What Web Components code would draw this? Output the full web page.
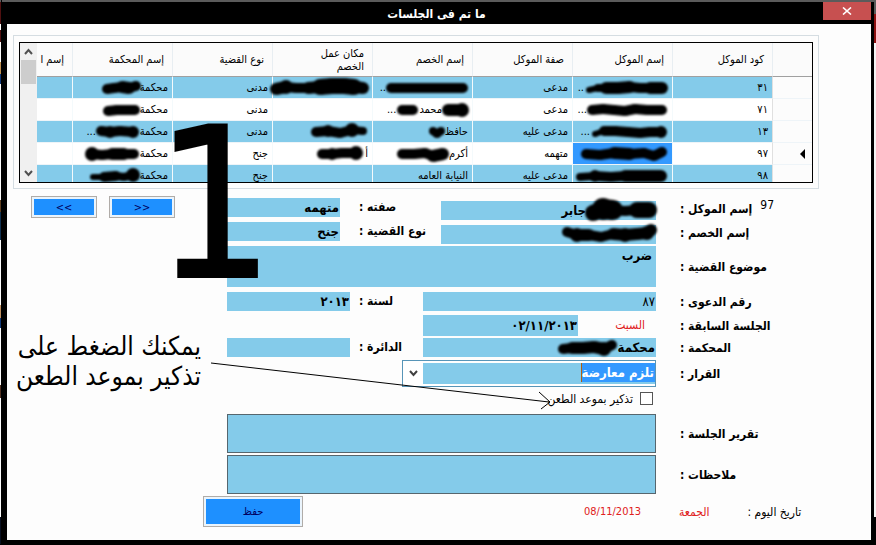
<!DOCTYPE html>
<html lang="ar">
<head>
<meta charset="utf-8">
<title>ما تم فى الجلسات</title>
<style>
html, body { margin: 0; min-height: 100%; background: #000; }
body { font-family: "DejaVu Sans Condensed", "DejaVu Sans", sans-serif; font-size: 11px; color: #000; }
</style>
</head>
<body>
<session-window></session-window>
<script>
const define = (name, html, setup) => customElements.define(name, class extends HTMLElement {
  constructor() {
    super();
    this.attachShadow({ mode: 'open' }).innerHTML = html;
  }
  connectedCallback() { if (setup) setup.call(this, this.shadowRoot); }
});

/* A scribble of soft black ink; points are "x,y,radius" joined in order. */
define('ink-blot', `<style>
  :host { display: block; flex: none; height: 16px; }
  :host([over]) { position: absolute; right: -1px; top: 0; }
  svg { display: block; overflow: visible; filter: blur(1.3px); }
</style><svg height="16"></svg>`, function (root) {
  const pts = this.getAttribute('points').split(' ').map(p => p.split(',').map(Number));
  const svg = root.querySelector('svg');
  svg.setAttribute('width', this.getAttribute('width'));
  let s = '';
  pts.forEach(([x, y, r], i) => {
    s += `<circle cx="${x}" cy="${y}" r="${r}"/>`;
    if (i) {
      const [a, b, q] = pts[i - 1];
      s += `<path d="M${a} ${b}L${x} ${y}" stroke="#000" stroke-width="${Math.min(r, q) * 2}"/>`;
    }
  });
  svg.innerHTML = s;
});

define('title-bar', `<style>
  :host { display: grid; grid-template-columns: 48px 1fr 48px; height: 22px; color: #fff; background: #000; border-top: 2px solid #5b5b5b; }
  h1 { margin: 0; grid-column: 2; text-align: center; font-size: 12px; line-height: 24px; font-weight: bold; }
  button { height: 18px; padding: 0; border: 0; background: #c75050; display: grid; place-items: center; }
</style><h1 dir="rtl"><slot></slot></h1>
<button aria-label="إغلاق"><svg width="10" height="8" viewBox="0 0 10 8"><path d="M1 .5L9 7.5M9 .5L1 7.5" stroke="#fff" stroke-width="1.6"/></svg></button>`);

define('scroll-strip', `<style>
  :host { display: flex; flex-direction: column; width: 17px; background: #f0f0f0; }
  button { height: 17px; padding: 0; border: 0; background: none; display: grid; place-items: center; }
  i { height: 24px; background: #cdcdcd; margin: 0 1px; }
  span { flex: 1; }
  path { fill: none; stroke: #505050; stroke-width: 2; }
</style>
<button aria-label="أعلى"><svg width="9" height="7"><path d="M1 6L4.500 2L8 6"/></svg></button><i></i><span></span>
<button aria-label="أسفل"><svg width="9" height="7"><path d="M1 1L4.500 5L8 1"/></svg></button>`);

const ROWS = [
  { code: '٣١', cells: [['*84|5,10,3 14,8,4 22,8,6 34,8,6 46,7,6 56,8,5 66,8,6 78,8,6', '..'], ['مدعى'],
    ['*82|5,8,5 18,8,5 34,8,5 50,8,5 64,8,5 77,8,5', '..'], ['*96|4,9,6 14,7,7 24,8,5 36,8,6 48,7,8 60,6,8 72,6,8 82,7,8 91,8,6'], ['مدنى'], ['محكمة', '*38|5,9,5 12,8,5 20,7,6 27,8,6 34,6,5']] },
  { code: '٧١', cells: [['*81|5,8,5 16,7,5 27,8,5 38,9,5 48,7,5 60,8,5 75,8,5', '...'], ['مدعى'],
    ['*26|6,8,6 13,8,6 20,8,7', 'محمد', '*23|6,8,5 17,8,5', '...'], [], ['مدنى'], ['محكمة', '*37|5,9,5 14,8,5 23,8,5 32,8,5']] },
  { code: '١٣', cells: [['*78|5,10,3 14,7,5 25,7,5 38,8,5 50,9,5 60,8,5 71,8,6', '...'], ['مدعى عليه'],
    ['حافظ', '*17|5,7,4 9,10,4 13,7,4'], ['*58|6,8,5 18,7,6 30,9,5 42,6,7 53,7,4'], ['مدنى'], ['محكمة', '*44|5,7,5 14,8,6 24,7,5 37,8,6', '...']] },
  { code: '٩٧', current: true, cells: [['*88|6,8,5 20,9,5 34,7,6 50,8,6 64,7,5 74,10,5 82,6,5'], ['متهمه'],
    ['أكرم', '*52|5,8,5 17,8,5 28,7,5 36,10,6 46,8,6'], ['أ', '*49|6,8,5 16,8,6 26,7,5 40,7,7'], ['جنح'], ['محكمة', '*54|6,8,7 16,9,5 26,8,6 38,8,6 48,8,5']] },
  { code: '٩٨', cells: [['*93|5,9,4 20,8,6 36,9,5 50,8,6 66,8,6 86,8,6'], ['مدعى عليه'], ['النيابة العامه'], [], ['جنح'], ['محكمة', '*52|5,9,3 16,9,5 28,8,5 36,9,4 45,7,7']] }
];

define('case-grid', `<style>
  :host { display: flex; height: 139px; border: 1px solid #000; background: #fff; }
  .view { flex: 1; min-width: 0; overflow: hidden; direction: rtl; }
  table { border-collapse: separate; border-spacing: 0; table-layout: fixed; width: 840px; }
  th, td { box-sizing: border-box; padding: 0 4px; text-align: start; font-weight: normal; border-left: 1px solid #e8eef2; }
  th { height: 34px; padding: 0 8px; line-height: 13px; background: #fbfbfb; border-bottom: 1px solid #a0a0a0; white-space: pre-line; }
  td { height: 22px; border-bottom: 1px solid #eef4f8; border-left-color: #f4fafc; white-space: nowrap; }
  td div { display: flex; align-items: center; line-height: 20px; height: 21px; }
  tr:nth-child(odd) td { background: #84cbea; }
  tbody td.head { background: #fcfcfc !important; border-left-color: #e0e0e0; }
  td.head svg { margin-right: 3px; }
  td.on { background: #3399ff !important; }
</style>
<scroll-strip></scroll-strip>
<div class="view"><table><colgroup><col style="width:40px"></colgroup>
<thead><tr><th></th><th>كود الموكل</th><th>إسم الموكل</th><th>صفة الموكل</th><th>إسم الخصم</th><th>مكان عمل
الخصم</th><th>نوع القضية</th><th>إسم المحكمة</th><th>إسم ا</th></tr></thead><tbody></tbody></table></div>`, function (root) {
  const part = p => p[0] === '*'
    ? `<ink-blot width="${p.slice(1).split('|')[0]}" points="${p.split('|')[1]}"></ink-blot>`
    : `<span>${p}</span>`;
  root.querySelector('tbody').innerHTML = ROWS.map(r => `<tr>
    <td class="head"><div>${r.current ? '<svg width="5" height="10"><path d="M5 0L0 5L5 10Z"/></svg>' : ''}</div></td>
    <td>${r.code}</td>${r.cells.map((c, i) => `<td class="${r.current && !i ? 'on' : ''}"><div>${c.map(part).join('')}</div></td>`).join('')}<td></td></tr>`).join('');
});

define('frame-button', `<style>
  :host { display: block; box-sizing: border-box; border: 1px solid #b0aca8; padding: 2px; background: #eaf4fc; }
  button { display: block; width: 100%; height: 100%; padding: 0; border: 0; background: #1e90ff; color: #000060; font: inherit; }
</style><button><slot></slot></button>`);

/* One line of the form: the fields, and the caption to their right. */
define('form-line', `<style>
  :host { display: flex; gap: 24px; min-height: 19px; }
  .fields { flex: 1; min-width: 0; display: flex; justify-content: flex-end; position: relative; }
  .caption { width: 191px; display: flex; align-items: center; justify-content: flex-end; font-size: 12px; font-weight: bold; white-space: nowrap; }
</style><div class="fields"><slot></slot></div><div class="caption" dir="rtl"><slot name="caption"></slot></div>`);

define('value-box', `<style>
  :host { display: block; position: relative; height: 19px; flex: none; }
  input, textarea { display: block; box-sizing: border-box; width: 100%; height: 100%; margin: 0; padding: 0 1px; border: 0; border-radius: 0; outline: 0; resize: none;
    background: #84cbea; color: #000; font: bold 13px/19px "DejaVu Sans Condensed", "DejaVu Sans", sans-serif; }
  textarea { padding: 0 4px; }
  :host([framed]) textarea { border: 1px solid #56666e; }
  :host([plain]) input { font-weight: normal; }
  :host([shift]) input { padding-right: 70px; }
</style><slot></slot>`, function (root) {
  const el = document.createElement(this.hasAttribute('area') ? 'textarea' : 'input');
  el.dir = 'rtl';
  el.setAttribute('aria-label', this.getAttribute('name'));
  el.value = this.getAttribute('value') || '';
  root.insertBefore(el, root.querySelector('slot'));
});

define('combo-box', `<style>
  :host { display: flex; box-sizing: border-box; height: 27px; border: 1px solid #5795b8; background: #fff; padding: 2px 0; width: 254px; }
  button { width: 20px; padding: 0; border: 0; background: none; display: grid; place-items: center; }
  div { flex: 1; background: #84cbea; display: flex; direction: rtl; }
  input { field-sizing: content; box-sizing: border-box; height: 19px; padding: 0 1px 0 0; border: 0; border-left: 1px solid #b06010; outline: 0; background: #3399ff; color: #fff; font: bold 13px/19px "DejaVu Sans Condensed", "DejaVu Sans", sans-serif; }
</style><button aria-label="فتح القائمة"><svg width="9" height="7"><path d="M1 1L4.500 5L8 1" fill="none" stroke="#404040" stroke-width="2"/></svg></button>
<div><input role="combobox" aria-label="القرار" aria-expanded="false" value="تلزم معارضة"></div>`);

define('hearing-form', `<style>
  :host { display: flex; flex-direction: column; flex: 1; min-width: 0; padding-top: 9px; gap: 2px; }
  form-line { flex: none; }
  .tall { min-height: 22px; }
  .tag { flex: 1; min-width: 0; padding-left: 9px; font-size: 12px; font-weight: bold; line-height: 19px; white-space: nowrap; direction: rtl; text-align: left; }
  .narrow { width: 113px; margin-right: 10px; }
  .mid { width: 123px; }
  .name { width: 215px; align-self: flex-end; }
  .wide { width: 233px; }
  .id { font-weight: normal; margin-left: 8px; align-self: flex-start; }
  .red { color: #e02020; }
  .weekday { width: 67px; padding-right: 11px; text-align: right; font-size: 12px; line-height: 21px; }
  .check { display: flex; align-items: center; gap: 7px; direction: rtl; margin-right: 3px; font-size: 12px; }
  .check input { appearance: none; width: 13px; height: 13px; margin: 0; border: 1px solid #555; background: #fff; }
  footer { display: flex; margin: 0 0 13px -24px; align-items: center; font-size: 12px; }
  footer frame-button { width: 100px; height: 31px; margin-right: 281px; font-size: 11px; }
  .day { margin: 0 38px; }
  .date { font-size: 11px; }
</style>
<form-line class="tall"><value-box class="narrow" name="صفته" value="متهمه"></value-box><span class="tag">صفته :</span>
  <value-box class="name" shift name="إسم الموكل" value="جابر"><ink-blot over width="72" points="8,12,8 18,8,11 28,9,10 40,10,5 52,9,8 64,9,8"></ink-blot></value-box>
  <span slot="caption" class="id" dir="ltr">97</span><span slot="caption">إسم الموكل :</span></form-line>
<form-line class="tall"><value-box class="narrow" name="نوع القضية" value="جنح"></value-box><span class="tag">نوع القضية :</span>
  <value-box class="name" name="إسم الخصم"><ink-blot over width="96" points="6,7,5 16,10,7 28,10,6 40,12,5 52,9,6 64,10,7 76,9,6 86,8,7 90,5,6"></ink-blot></value-box>
  <span slot="caption">إسم الخصم :</span></form-line>
<form-line><value-box style="flex:1;height:41px" area name="موضوع القضية" value="ضرب"></value-box><span slot="caption">موضوع القضية :</span></form-line>
<form-line style="margin-top:3px"><value-box class="mid" name="لسنة" value="٢٠١٣"></value-box><span class="tag">لسنة :</span>
  <value-box class="wide" plain name="رقم الدعوى" value="٨٧"></value-box><span slot="caption">رقم الدعوى :</span></form-line>
<form-line style="margin-top:2px"><value-box style="width:155px;height:21px" name="الجلسة السابقة" value="٠٢/١١/٢٠١٣"></value-box>
  <span class="red weekday">السبت</span><span slot="caption">الجلسة السابقة :</span></form-line>
<form-line><value-box class="mid" name="الدائرة"></value-box><span class="tag">الدائرة :</span>
  <value-box class="wide" name="المحكمة" value="محكمة"><ink-blot over style="right:38px" width="60" points="5,11,5 14,10,6 25,10,6 36,9,6 46,11,7 54,7,5"></ink-blot></value-box><span slot="caption">المحكمة :</span></form-line>
<form-line style="margin-top:1px"><combo-box></combo-box><span slot="caption">القرار :</span></form-line>
<form-line><label class="check"><input type="checkbox"><span>تذكير بموعد الطعن</span></label></form-line>
<form-line style="margin-top:4px"><value-box style="flex:1;height:39px" area framed name="تقرير الجلسة"></value-box><span slot="caption">تقرير الجلسة :</span></form-line>
<form-line><value-box style="flex:1;height:39px" area framed name="ملاحظات"></value-box><span slot="caption">ملاحظات :</span></form-line>
<footer><frame-button>حفظ</frame-button><span class="red date">08/11/2013</span><span class="red day">الجمعة</span><span dir="rtl">تاريخ اليوم :</span></footer>`);

define('callout-layer', `<style>
  :host { display: contents; }
  .one { position: absolute; left: 148px; top: 77px; font-size: 208px; line-height: 208px; -webkit-text-stroke: 2px #000; pointer-events: none; }
  p { position: absolute; left: 10px; top: 307px; width: 184px; margin: 0; font-size: 26px; line-height: 30px; direction: rtl; white-space: pre; }
  svg { position: absolute; left: 204px; top: 338px; pointer-events: none; }
</style><span class="one">1</span><p>يمكنك الضغط على
تذكير بموعد الطعن</p>
<svg width="342" height="50"><path d="M0 1L338 40M328 30L339 40L330 47" fill="none" stroke="#000"/></svg>`);

define('session-window', `<style>
  :host { display: block; padding-bottom: 4px; background:
    linear-gradient(#5b5b5b 14px, #8c1010 14px 43px, #f4f4f4 43px 517px, #000 517px) right / 2px 100% no-repeat,
    linear-gradient(#5b5b5b 2px, #501010 2px 24px, #fff 24px 30px, #501010 30px 42px, #fff 42px 62px, #c09050 62px 74px, #103878 74px 84px, #fff 84px 200px, #604020 200px 212px, #103050 212px 240px, #fff 240px 305px, #c09060 305px 318px, #103878 318px 328px, #fff 328px 385px, #503020 385px 398px, #fff 398px 517px, #081020 517px) left / 1px 100% no-repeat,
    #000; }
  title-bar { margin: 0 2px; padding-right: 3px; }
  main { position: relative; margin: 0 5px 0 7px; background: #fdfdfd; padding-top: 11px; }
  .group { border: 1px solid #d5dde2; margin: 0 52px 0 6px; padding: 6px 5px 5px; }
  .body { display: flex; }
  nav { width: 196px; flex: none; padding: 7px 0 0 24px; display: flex; gap: 12px; }
  nav frame-button { width: 66px; height: 22px; font-size: 11px; }
</style>
<title-bar>ما تم فى الجلسات</title-bar>
<main>
  <div class="group"><case-grid></case-grid></div>
  <div class="body"><nav><frame-button>&lt;&lt;</frame-button><frame-button>&gt;&gt;</frame-button></nav><hearing-form></hearing-form></div>
  <callout-layer></callout-layer>
</main>`);
</script>
</body>
</html>
